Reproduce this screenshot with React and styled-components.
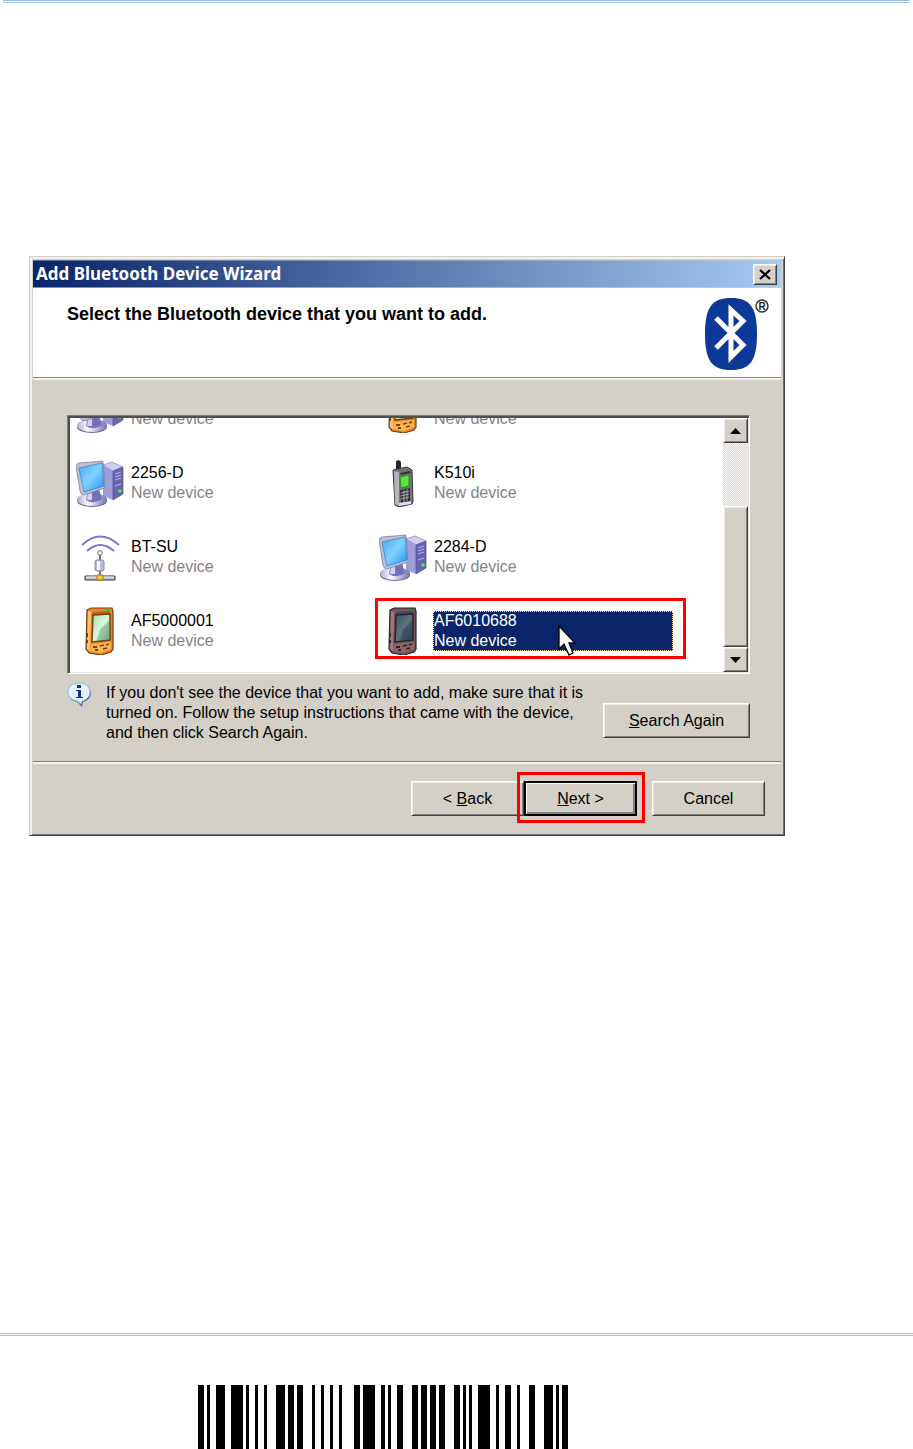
import React, { useState } from "react";
import styled, { createGlobalStyle, css } from "styled-components";

const face = "#d4d0c8";
const navy = "#0a246a";

const GlobalStyle = createGlobalStyle`
  body {
    margin: 0;
    background: #fff;
    color: #000;
    font-family: "Liberation Sans", Arial, sans-serif;
    font-size: 16px;
    line-height: 20px;
  }
  *, *::before, *::after {
    box-sizing: border-box;
  }
`;

const Page = styled.div`
  display: flex;
  flex-direction: column;
  min-height: 100vh;
`;

const DoubleRule = styled.div`
  height: 3px;
  margin: 0 ${(props) => props.$inset || 0}px;
  border-top: 1px solid ${(props) => props.$color};
  border-bottom: 1px solid ${(props) => props.$color};
`;

const Figure = styled.main`
  padding: 253px 128px 60px 29px;
`;

const PageFooter = styled.footer`
  margin-top: auto;
`;

const Barcode = styled.svg`
  display: block;
  height: 64px;
  margin: 49px 0 0 198px;
`;

const Dialog = styled.section`
  padding: 3px;
  background: ${face};
  border: 1px solid;
  border-color: ${face} #404040 #404040 ${face};
  box-shadow: inset 2px 2px #f3f1ed, inset -1px -1px #707070;
`;

const TitleBar = styled.header`
  display: flex;
  align-items: center;
  justify-content: space-between;
  height: 28px;
  padding: 0 4px 0 3px;
  color: #fff;
  background: linear-gradient(to right, ${navy}, #a6caf0);
  border-top: 1px solid rgba(212, 208, 200, 0.4);
  border-bottom: 1px solid rgba(212, 208, 200, 0.6);
`;

const Title = styled.h1`
  margin: 0;
  font-family: "Noto Sans", sans-serif;
  font-size: 17px;
  font-weight: 700;
`;

const raised = css`
  background: ${face};
  border: 1px solid;
  border-color: #fff #404040 #404040 #fff;
  box-shadow: inset 1px 1px #eceae6, inset -1px -1px #808080;
`;

const SmallButton = styled.button`
  ${raised}
  display: flex;
  flex: none;
  align-items: center;
  justify-content: center;
  width: ${(props) => props.$width}px;
  height: ${(props) => props.$height}px;
  padding: 0;
`;

const Banner = styled.div`
  display: flex;
  align-items: flex-start;
  justify-content: space-between;
  height: 89px;
  padding: 9px 10px 0 34px;
  background: #fff;
`;

const Heading = styled.h2`
  margin: 7px 0 0;
  font-size: 18px;
  line-height: 20px;
`;

const Groove = styled.hr`
  height: 3px;
  margin: 0;
  border: 0;
  border-top: 1px solid #808585;
  background: #f4f3f0;
`;

const Body = styled.div`
  padding: 35px 31px 18px 34px;
`;

const ListBox = styled.div`
  display: flex;
  height: 259px;
  padding: 2px 1px 1px 2px;
  background: #fff;
  border: 1px solid;
  border-color: #808080 #fff #fff #808080;
  box-shadow: inset 2px 2px #505050, inset -1px -1px #e6e3de;
`;

const Viewport = styled.div`
  display: flex;
  flex: 1;
  flex-direction: column;
  justify-content: flex-end;
  overflow: hidden;
  padding: 0 0 4px 6px;
`;

const Devices = styled.ul`
  display: grid;
  grid-template-columns: repeat(2, minmax(0, 303px));
  grid-auto-rows: 74px;
  margin: 0;
  padding: 0;
  list-style: none;
`;

const DeviceItem = styled.li`
  position: relative;
  display: flex;
  align-items: center;
  gap: 6px;
  padding-right: 9px;
`;

const DeviceIcon = styled.svg`
  flex: none;
  width: 48px;
  height: 48px;
`;

const DeviceLabel = styled.button`
  flex: 1;
  height: 40px;
  padding: 0 1px;
  border: 0;
  color: #000;
  font: inherit;
  text-align: left;
  background: ${(props) => (props.$selected ? navy : "transparent")};
  ${(props) =>
    props.$selected &&
    css`
      color: #fff;
      outline: 1px dotted #f5dba0;
      outline-offset: -1px;
    `}
`;

const DeviceLine = styled.span`
  display: block;
  color: ${(props) => (props.$muted ? "#848484" : "inherit")};
`;

const Highlight = styled.span`
  position: absolute;
  inset: ${(props) => props.$inset};
  border: 3px solid #f00;
  pointer-events: none;
`;

const Pointer = styled.svg`
  position: absolute;
  top: 31px;
  left: 179px;
  pointer-events: none;
`;

const ScrollBar = styled.div`
  display: flex;
  flex-direction: column;
  width: 25px;
`;

const Track = styled.div`
  flex: 1;
  background: repeating-conic-gradient(#dedbd5 0 25%, #f4f3f1 0 50%) 0 0 / 2px 2px;
`;

const Thumb = styled.div`
  ${raised}
  height: 141px;
`;

const NoteRow = styled.div`
  display: flex;
  align-items: flex-start;
  justify-content: space-between;
  padding-top: 8px;
`;

const Note = styled.div`
  display: flex;
  gap: 14px;
`;

const NoteText = styled.p`
  max-width: 488px;
  margin: 1px 0 0;
`;

const PushButton = styled.button`
  ${raised}
  width: ${(props) => props.$width || 113}px;
  height: 35px;
  margin-top: ${(props) => props.$top || 0}px;
  padding: 0;
  color: #000;
  font: inherit;
  ${(props) =>
    props.$primary &&
    css`
      border: 2px solid #000;
      box-shadow: inset 1px 1px #fff, inset -2px -2px #808080;
    `}
`;

const Actions = styled.div`
  display: flex;
  justify-content: flex-end;
  padding: 17px 16px 16px;
`;

const Marked = styled.div`
  position: relative;
  margin-right: 15px;
`;

function BluetoothLogo() {
  return (
    <svg width="67" height="74" viewBox="0 0 67 74" role="img" aria-label="Bluetooth">
      <path
        d="M27 1C46 1 53 10 53 37S46 73 27 73 1 64 1 37 8 1 27 1Z"
        fill="#0c3898"
      />
      <path
        d="M12 21 39 48 27 60V13L39 24 12 51"
        fill="none"
        stroke="#fff"
        strokeWidth="5"
        strokeMiterlimit="8"
      />
      <circle cx="58" cy="9" r="6" fill="#fff" stroke="#333" strokeWidth="1.5" />
      <text x="58" y="13" fontSize="10" fontWeight="700" textAnchor="middle" fill="#222">
        R
      </text>
    </svg>
  );
}

function ComputerIcon() {
  return (
    <DeviceIcon viewBox="0 0 48 48" aria-hidden="true">
      <defs>
        <linearGradient id="screen" x1="0" y1="0" x2="1" y2="1">
          <stop offset="0" stopColor="#4ba5f6" />
          <stop offset="0.5" stopColor="#7fd2ff" />
          <stop offset="1" stopColor="#1f8cf3" />
        </linearGradient>
        <linearGradient id="stand" x1="0" y1="0" x2="1" y2="0">
          <stop offset="0" stopColor="#a8a7cc" />
          <stop offset="0.35" stopColor="#fff" />
          <stop offset="1" stopColor="#7371b6" />
        </linearGradient>
      </defs>
      <path d="M27 6 36 3 47 8 37 12Z" fill="#cfcff0" stroke="#8583c4" strokeWidth="0.7" />
      <path d="M27 6 37 12V41L27 37Z" fill="#9f9dd9" />
      <path d="M37 12 47 8V35L37 41Z" fill="#6664b0" stroke="#504e98" strokeWidth="0.7" />
      <path d="m39 15 6-2m-6 5 6-2m-6 5 6-2m-6 8 6-2" stroke="#aeadde" strokeWidth="1.3" />
      <circle cx="44" cy="32" r="1.8" fill="#65e83a" />
      <ellipse cx="16" cy="42" rx="15" ry="6" fill="#6b6a96" />
      <ellipse cx="16" cy="40.5" rx="15" ry="6.5" fill="url(#stand)" />
      <path d="M12 30 22 27 26 40Q18 46 10 41Z" fill="#7371bd" />
      <path d="m12 33 4-1v9l-5 0Z" fill="#d2d1ef" />
      <path d="M0 7Q0 5 3 4L27 2 29 29 8 36Q5 36 4 32Z" fill="#bdbdd6" stroke="#80809f" strokeWidth="0.8" />
      <path d="M3 9 26 4 28 27 8 33Z" fill="url(#screen)" stroke="#2a72ba" strokeWidth="0.6" />
    </DeviceIcon>
  );
}

function AccessPointIcon() {
  return (
    <DeviceIcon viewBox="0 0 48 48" aria-hidden="true">
      <path d="M6 12Q24-5 43 12M11 18Q24 6 38 18" fill="none" stroke="#7775d8" strokeWidth="2" />
      <path d="M24 22V44" stroke="#777" strokeWidth="2" />
      <circle cx="24" cy="20" r="2.3" fill="#fff" stroke="#666" />
      <rect x="19" y="27" width="9" height="11" rx="2" fill="#bab9df" stroke="#88879f" />
      <path d="M21 28h3v9h-3Z" fill="#f8f8ff" />
      <path d="M9 43h30v4H9Z" fill="#b9c4c9" stroke="#333" />
      <path d="M10 44h28" stroke="#edf4f7" />
      <path d="M21 42h6v5h-6Z" fill="#f6c52c" stroke="#a97814" />
    </DeviceIcon>
  );
}

function PhoneIcon() {
  return (
    <DeviceIcon viewBox="0 0 48 48" aria-hidden="true">
      <path d="M17 2 20 1 22 3V14H17Z" fill="#22243c" />
      <path d="M14 11 28 8 33 11 34 42 33 45 20 48 16 46Z" fill="#747477" stroke="#37373b" />
      <path d="M15 12 20 13V47L16 45Z" fill="#b5b5b8" />
      <path d="m21 14 10-2 1 2-10 2Z" fill="#333" />
      <path d="M21 18 30 16V27L22 29Z" fill="#56e63a" stroke="#247b20" strokeWidth="0.8" />
      <path d="M21 31 31 29V43L22 44Z" fill="#303039" />
      <path d="m22 34 8-2m-8 5 8-2m-8 5 8-2M25 31v12m3-13v12" stroke="#a7a7ae" />
      <path d="m20 44 12-2v3l-12 2Z" fill="#dedef4" />
    </DeviceIcon>
  );
}

function PdaIcon({ dim }) {
  const body = dim ? "#795251" : "#ee8424";
  const edge = dim ? "#202543" : "#6c421c";
  const glass = dim ? "glassDim" : "glass";
  return (
    <DeviceIcon viewBox="0 0 48 48" aria-hidden="true">
      <defs>
        <linearGradient id={glass} x1="0" y1="0" x2="1" y2="1">
          <stop offset="0" stopColor={dim ? "#3b535f" : "#a7dba8"} />
          <stop offset="0.5" stopColor={dim ? "#60747a" : "#dcf7da"} />
          <stop offset="1" stopColor={dim ? "#2e4556" : "#76b181"} />
        </linearGradient>
      </defs>
      <path
        d="M11 3 15 1H36L37 4V42L35 45 25 48 13 46 10 42Z"
        fill={body}
        stroke={edge}
        strokeWidth="1.2"
      />
      <path d="M12 4 15 5 14 44 11 42Z" fill={dim ? "#a47970" : "#ffc26b"} />
      <path d="M17 5 34 4V7L17 8Z" fill={dim ? "#533f51" : "#c75e1e"} />
      <path d="m28 2 6 0 1 2-5 0Z" fill={dim ? "#28785e" : "#44c73b"} />
      <path
        d="M17 8 34 7V33L16 35Z"
        fill={`url(#${glass})`}
        stroke={edge}
        strokeWidth="1.5"
      />
      <path d="m33 14-9 8-3 12 12-2Z" fill={dim ? "#253b4f" : "#5a9e70"} opacity="0.45" />
      <path d="M15 37 35 35V42L25 46 14 44Z" fill={dim ? "#8b655e" : "#ffb54c"} />
      <path d="m17 40 4 0m3-1 4-1m2 0 3-1m-14 6 3 0m5-1 4-1" stroke={edge} strokeWidth="1.8" />
      <path d="M11 26v4m0 3v3" stroke={edge} strokeWidth="2" />
    </DeviceIcon>
  );
}

function InfoIcon() {
  return (
    <svg width="25" height="26" viewBox="0 0 25 26" aria-hidden="true">
      <path
        d="M13 2C19 2 24 6 24 11S20 19 16 20L15 25 10 20C5 19 2 16 2 11S6 2 13 2Z"
        fill="#466f9f"
      />
      <path
        d="M12 1C19 1 23 5 23 10S19 18 15 19L14 22 10 19C5 18 1 15 1 10S5 1 12 1Z"
        fill="#e4f3ff"
        stroke="#91b6da"
      />
      <path d="M10 3h4v3h-4ZM9 8h5v7h2v1H9v-1h2V9H9Z" fill="#15309d" />
    </svg>
  );
}

function Arrow({ down }) {
  return (
    <svg width="11" height="6" viewBox="0 0 11 6" aria-hidden="true">
      <path d={down ? "M0 0H11L5.500 6Z" : "M0 6H11L5.500 0Z"} fill="#000" />
    </svg>
  );
}

const icons = {
  computer: <ComputerIcon />,
  accessPoint: <AccessPointIcon />,
  phone: <PhoneIcon />,
  pda: <PdaIcon />,
};

const devices = [
  { id: 1, name: "", icon: "computer" },
  { id: 2, name: "", icon: "pda" },
  { id: 3, name: "2256-D", icon: "computer" },
  { id: 4, name: "K510i", icon: "phone" },
  { id: 5, name: "BT-SU", icon: "accessPoint" },
  { id: 6, name: "2284-D", icon: "computer" },
  { id: 7, name: "AF5000001", icon: "pda" },
  { id: 8, name: "AF6010688", icon: "pda" },
];

// [start, width] of every black bar
const bars = [
  [0, 6], [9, 3], [18, 9], [33, 12], [48, 3], [57, 3], [66, 3], [78, 9],
  [90, 6], [99, 6], [114, 3], [123, 3], [132, 3], [141, 3], [156, 6],
  [165, 12], [183, 4], [190, 3], [199, 6], [214, 6], [223, 6], [232, 6],
  [241, 6], [256, 6], [265, 3], [271, 3], [280, 12], [298, 3], [307, 6],
  [319, 3], [331, 6], [346, 9], [358, 3], [364, 6],
];

const Device = ({ device, selected, onSelect }) => (
  <DeviceItem>
    {selected && device.icon === "pda" ? <PdaIcon dim /> : icons[device.icon]}
    <DeviceLabel
      type="button"
      $selected={selected}
      aria-pressed={selected}
      onClick={() => onSelect(device.id)}
    >
      <DeviceLine>{device.name || "\u00a0"}</DeviceLine>
      <DeviceLine $muted={!selected}>New device</DeviceLine>
    </DeviceLabel>
    {device.id === 8 && (
      <>
        <Highlight $inset="4px -4px 9px -4px" />
        <Pointer width="20" height="32" viewBox="0 0 20 32" aria-hidden="true">
          <path
            d="M1 1V24L6 19 11 30 15 28 11 18H17Z"
            fill="#fff"
            stroke="#000"
            strokeWidth="1.3"
          />
        </Pointer>
      </>
    )}
  </DeviceItem>
);

const App = () => {
  const [selectedId, setSelectedId] = useState(8);

  return (
    <Page>
      <GlobalStyle />
      <DoubleRule $color="#9dc0e4" $inset={3} />
      <Figure>
        <Dialog aria-labelledby="wizard-title">
          <TitleBar>
            <Title id="wizard-title">Add Bluetooth Device Wizard</Title>
            <SmallButton type="button" aria-label="Close" $width={24} $height={21}>
              <svg width="12" height="11" viewBox="0 0 12 11" aria-hidden="true">
                <path d="m1 1 10 9M11 1 1 10" stroke="#000" strokeWidth="2.200" />
              </svg>
            </SmallButton>
          </TitleBar>
          <Banner>
            <Heading>Select the Bluetooth device that you want to add.</Heading>
            <BluetoothLogo />
          </Banner>
          <Groove />
          <Body>
            <ListBox>
              <Viewport>
                <Devices>
                  {devices.map((device) => (
                    <Device
                      key={device.id}
                      device={device}
                      selected={device.id === selectedId}
                      onSelect={setSelectedId}
                    />
                  ))}
                </Devices>
              </Viewport>
              <ScrollBar>
                <SmallButton type="button" aria-label="Scroll up" $width={25} $height={25}>
                  <Arrow />
                </SmallButton>
                <Track />
                <Thumb />
                <SmallButton type="button" aria-label="Scroll down" $width={25} $height={25}>
                  <Arrow down />
                </SmallButton>
              </ScrollBar>
            </ListBox>
            <NoteRow>
              <Note>
                <InfoIcon />
                <NoteText>
                  If you don't see the device that you want to add, make sure that it is
                  turned on. Follow the setup instructions that came with the device, and
                  then click Search Again.
                </NoteText>
              </Note>
              <PushButton type="button" $width={147} $top={21}>
                <u>S</u>earch Again
              </PushButton>
            </NoteRow>
          </Body>
          <Groove />
          <Actions>
            <PushButton type="button">
              &lt; <u>B</u>ack
            </PushButton>
            <Marked>
              <PushButton type="button" $primary>
                <u>N</u>ext &gt;
              </PushButton>
              <Highlight $inset="-9px -8px -7px -7px" />
            </Marked>
            <PushButton type="button">Cancel</PushButton>
          </Actions>
        </Dialog>
      </Figure>
      <PageFooter>
        <DoubleRule $color="#a3bfd6" />
        <Barcode width="370" viewBox="0 0 370 64" role="img" aria-label="Barcode">
          {bars.map(([x, width]) => (
            <rect key={x} x={x} y="0" width={width} height="64" />
          ))}
        </Barcode>
      </PageFooter>
    </Page>
  );
};

export default App;
